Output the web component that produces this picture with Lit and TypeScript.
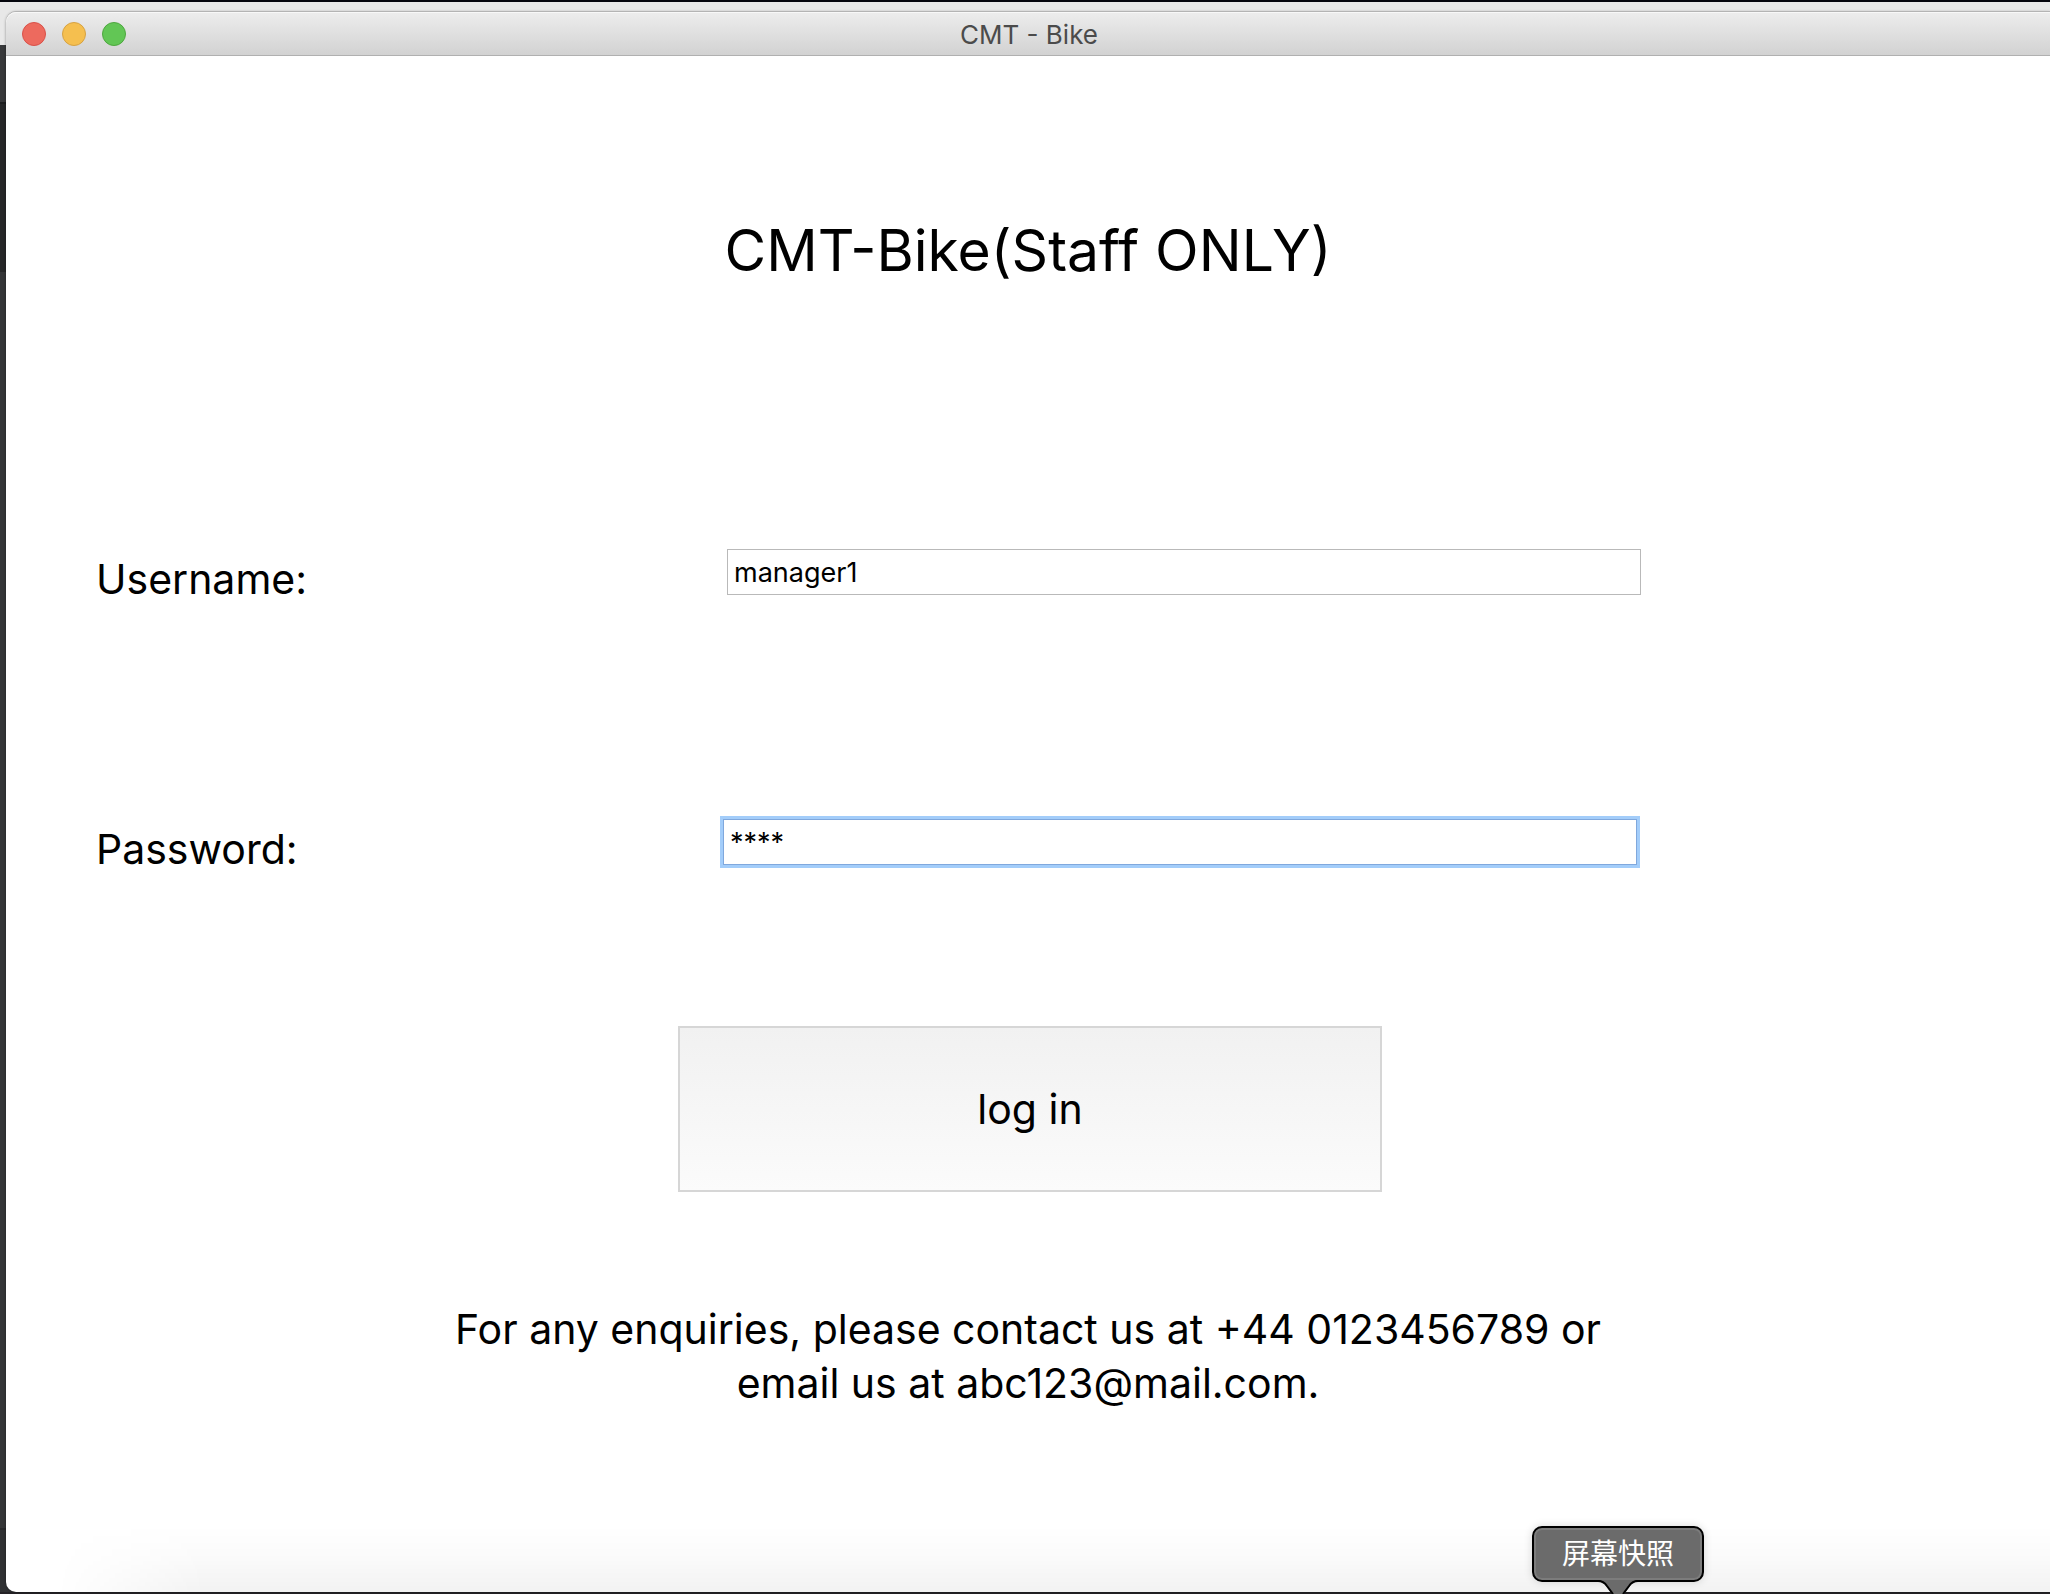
import { LitElement, html, css } from "lit";
import { customElement, state } from "lit/decorators.js";

@customElement("title-bar")
class TitleBar extends LitElement {
  static styles = css`
    :host {
      display: block;
    }
    .bar {
      display: grid;
      grid-template-columns: 1fr auto 1fr;
      align-items: center;
      height: 44px;
      padding: 0 14px 0 16px;
      box-sizing: border-box;
      border-radius: 10px 0 0 0;
      border-bottom: 1px solid #b0b0b0;
      background: linear-gradient(#ededed, #d2d2d2);
      box-shadow: inset 0 1px 0 #f8f8f8, 0 -1px 0 #b4b4b4;
    }
    .lights {
      display: flex;
      gap: 16px;
    }
    .light {
      width: 24px;
      height: 24px;
      padding: 0;
      box-sizing: border-box;
      border: 1px solid;
      border-radius: 50%;
    }
    .close {
      background: #ed6a5e;
      border-color: #d95149;
    }
    .minimise {
      background: #f5bf4f;
      border-color: #d6a243;
    }
    .zoom {
      background: #62c655;
      border-color: #4ea73f;
    }
    .caption {
      padding-top: 2px;
      font-size: 26px;
      line-height: 32px;
      color: #4b4b4b;
    }
  `;

  render() {
    return html`
      <header class="bar">
        <div class="lights">
          <button class="light close" aria-label="Close"></button>
          <button class="light minimise" aria-label="Minimise"></button>
          <button class="light zoom" aria-label="Zoom"></button>
        </div>
        <span class="caption">CMT - Bike</span>
      </header>
    `;
  }
}

@customElement("login-form")
class LoginForm extends LitElement {
  @state() private username = "manager1";
  @state() private password = "1234";

  static styles = css`
    :host {
      display: block;
    }
    .form {
      display: grid;
      grid-template-columns: 631fr 914fr 409fr;
      row-gap: 216px;
      padding-left: 90px;
    }
    .row {
      display: grid;
      grid-column: 1 / -1;
      grid-template-columns: subgrid;
      align-items: start;
    }
    .label {
      padding-top: 6px;
      font-size: 41px;
      line-height: 48px;
    }
    .field {
      height: 46px;
      padding: 0 6px;
      box-sizing: border-box;
      border: 1px solid #b9b9b9;
      border-radius: 0;
      background: #fff;
      font: 27px/32px Inter, sans-serif;
      color: #000;
      outline: none;
    }
    .active {
      margin: 0 4px 0 -4px;
      border-color: #80a8dd;
      box-shadow: 0 0 0 3px #a3cdfa;
    }
    .actions {
      display: grid;
      grid-template-columns: 672fr 704fr 668fr;
      padding-top: 153px;
    }
    .submit {
      grid-column: 2;
      height: 166px;
      border: 2px solid #d6d6d6;
      background: linear-gradient(#f1f1f1, #fbfbfb);
      font: 41px/54px Inter, sans-serif;
      color: #000;
    }
  `;

  private onUser(e: Event) {
    this.username = (e.target as HTMLInputElement).value;
  }

  // The mask is drawn with asterisks, so typed characters are kept apart from what is shown.
  private onPassword(e: Event) {
    const field = e.target as HTMLInputElement;
    const typed = field.value.replace(/\*/g, "");
    this.password = this.password.slice(0, field.value.length - typed.length) + typed;
    field.value = "*".repeat(this.password.length);
  }

  render() {
    return html`
      <form @submit=${(e: Event) => e.preventDefault()}>
        <div class="form">
          <div class="row">
            <label class="label" for="user">Username:</label>
            <input class="field" id="user" type="text" .value=${this.username} @input=${this.onUser} />
          </div>
          <div class="row">
            <label class="label" for="pass">Password:</label>
            <input
              class="field active"
              id="pass"
              type="text"
              autocomplete="off"
              .value=${"*".repeat(this.password.length)}
              @input=${this.onPassword}
            />
          </div>
        </div>
        <div class="actions">
          <button class="submit" type="submit">log in</button>
        </div>
      </form>
    `;
  }
}

@customElement("dock-tooltip")
class DockTooltip extends LitElement {
  static styles = css`
    :host {
      display: block;
    }
    .bubble {
      position: relative;
      padding: 6px 28px 10px;
      border: 2px solid #000;
      border-radius: 10px;
      background: #6b6b6b;
      box-shadow: inset 0 0 0 2px #7c7c7c, 0 0 8px rgba(0, 0, 0, 0.15);
      color: #fff;
      font: 28px/36px "Noto Sans CJK SC", sans-serif;
      white-space: nowrap;
    }
    .arrow {
      position: absolute;
      left: 50%;
      top: 100%;
      width: 40px;
      height: 14px;
      margin-left: -20px;
    }
  `;

  render() {
    return html`
      <div class="bubble" role="tooltip">
        屏幕快照
        <svg class="arrow" viewBox="0 0 40 14" aria-hidden="true">
          <path d="M1 0C5 1 6 3 8 6L14 14H26L32 6C34 3 35 1 39 0Z" fill="#6b6b6b" />
          <path d="M0 1C5 1 7 3 9 6L15 14M40 1C35 1 33 3 31 6L25 14" fill="none" stroke="#000" stroke-width="2" />
        </svg>
      </div>
    `;
  }
}

@customElement("app-root")
class AppRoot extends LitElement {
  static styles = css`
    :host {
      display: block;
      font-family: Inter, "Noto Sans CJK SC", sans-serif;
      color: #000;
    }
    .desktop {
      position: relative;
      display: flex;
      flex-direction: column;
      min-height: 100vh;
      box-sizing: border-box;
      padding: 12px 0 2px 6px;
      overflow: hidden;
      background: linear-gradient(
        #05060d 0 2px,
        #e8e8e8 2px 45px,
        #37383a 45px 102px,
        #1d1e1f 102px 104px,
        #262728 104px 272px,
        #343537 272px 1528px,
        #28292b 1528px 1530px,
        #303133 1530px calc(100% - 2px),
        #242226 calc(100% - 2px)
      );
    }
    .window {
      display: flex;
      flex: 1;
      flex-direction: column;
      border-radius: 10px 0 0 10px;
      background: #fff;
      box-shadow: 0 0 3px rgba(0, 0, 0, 0.4);
    }
    .heading {
      margin: 0;
      padding: 158px 0 262px;
      font-size: 57px;
      font-weight: 400;
      line-height: 73px;
      text-align: center;
    }
    .contact {
      box-sizing: border-box;
      max-width: 1200px;
      margin: 0 auto;
      padding: 110px 0 80px;
      font-size: 41px;
      line-height: 54px;
      text-align: center;
    }
    .shade {
      position: absolute;
      right: 0;
      bottom: 2px;
      left: 6px;
      height: 66px;
      background: linear-gradient(transparent, rgba(0, 0, 0, 0.02) 50%, rgba(0, 0, 0, 0.05));
      mask-image: linear-gradient(to right, transparent 50px, #000 200px);
      pointer-events: none;
    }
    .tip {
      position: absolute;
      left: 1532px;
      bottom: 12px;
    }
  `;

  render() {
    return html`
      <div class="desktop">
        <main class="window">
          <title-bar></title-bar>
          <h1 class="heading">CMT-Bike(Staff ONLY)</h1>
          <login-form></login-form>
          <p class="contact">For any enquiries, please contact us at +44 0123456789 or email us at abc123@mail.com.</p>
        </main>
        <div class="shade"></div>
        <dock-tooltip class="tip"></dock-tooltip>
      </div>
    `;
  }
}
